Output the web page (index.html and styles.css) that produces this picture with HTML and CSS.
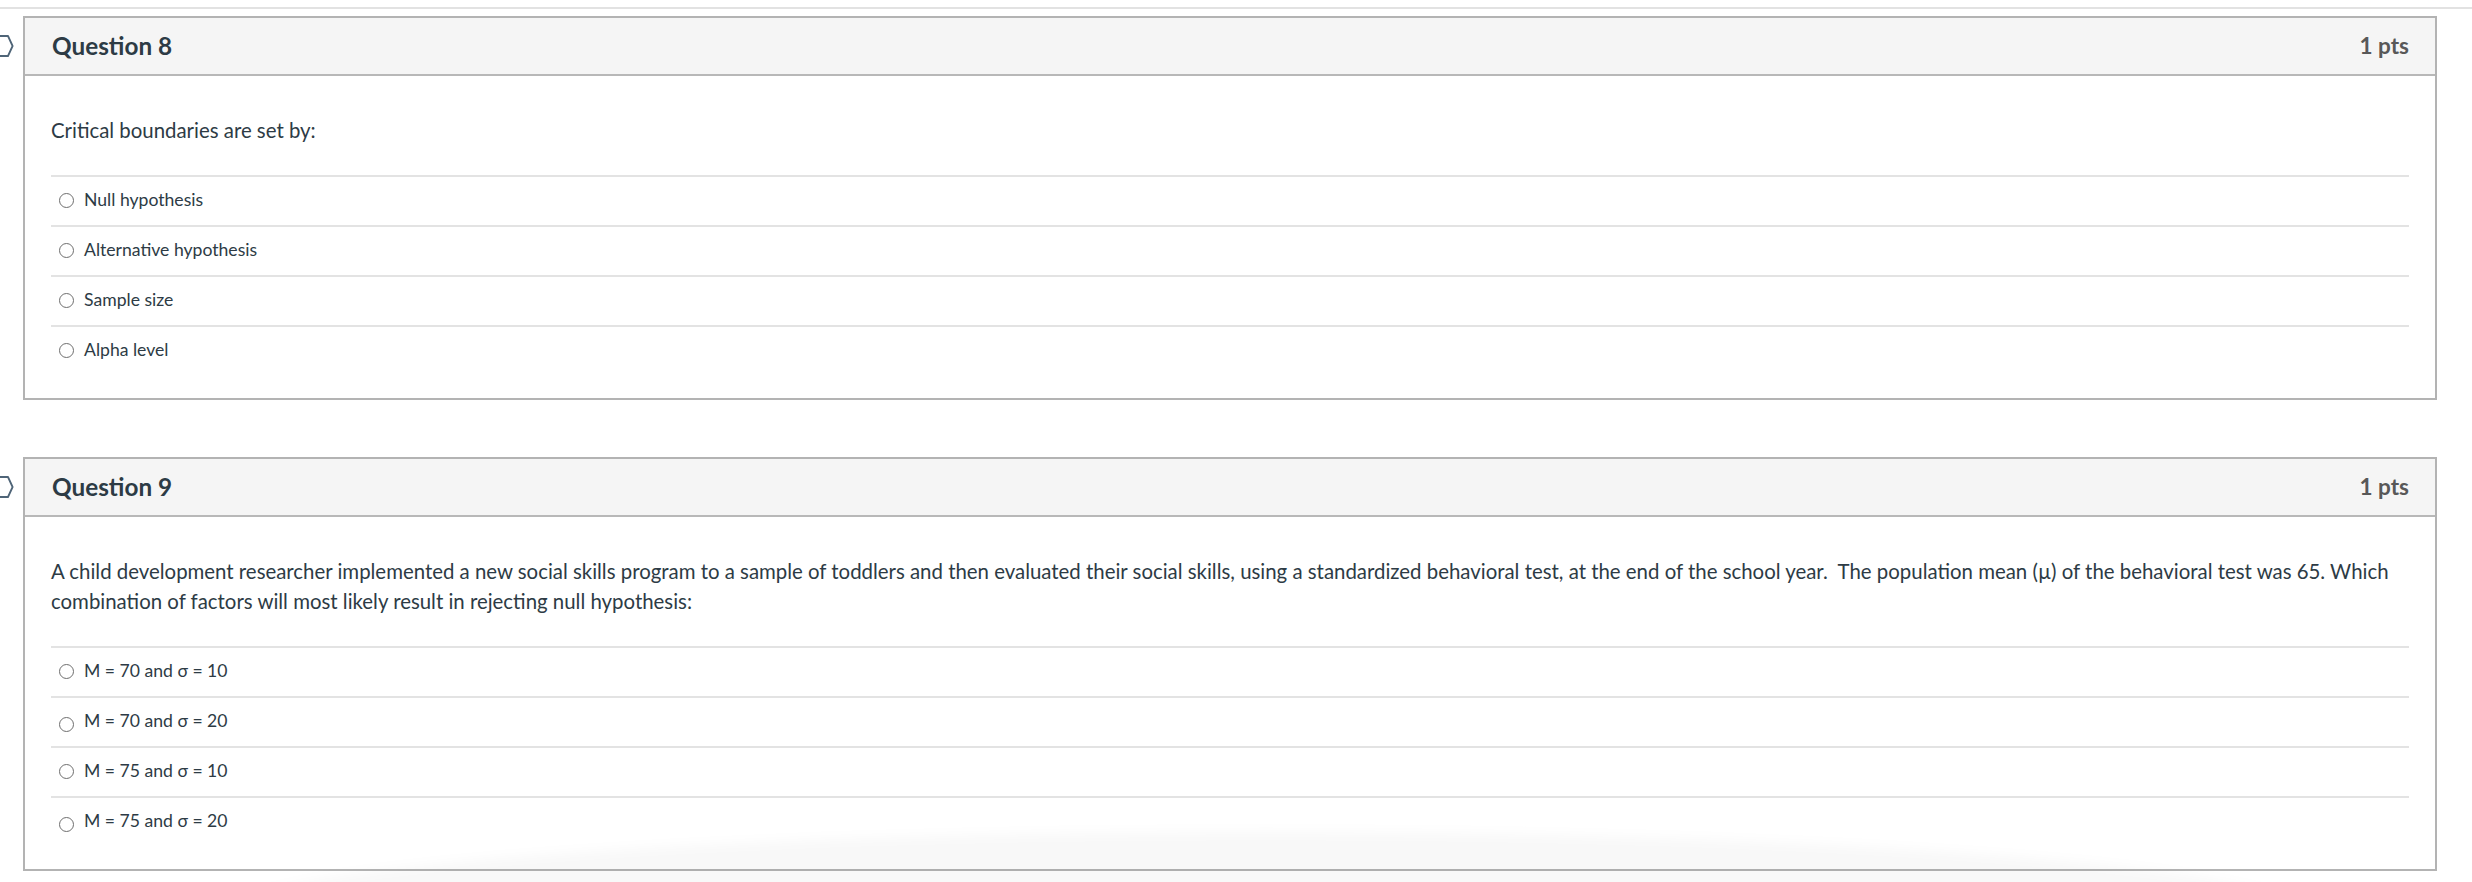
FILE: index.html
```html
<!DOCTYPE html>
<html lang="en">
<head>
<meta charset="utf-8">
<title>Quiz</title>
<link rel="stylesheet" href="styles.css">
</head>
<body>
<div class="page">
  <div class="topbar"></div>

  <div class="question">
    <div class="flag">
      <svg width="14" height="22" viewBox="0 0 14 22"><path d="M-6 1 H8 L12.6 11 L8 21 H-6" fill="none" stroke="#4f6578" stroke-width="1.8" stroke-linejoin="round"/></svg>
    </div>
    <div class="card">
      <div class="card-header">
        <span class="title">Question 8</span>
        <span class="pts">1 pts</span>
      </div>
      <div class="card-body">
        <p class="prompt">Critical boundaries are set by:</p>
        <div class="answers">
          <label class="answer"><span class="radio"></span><span>Null hypothesis</span></label>
          <label class="answer"><span class="radio"></span><span>Alternative hypothesis</span></label>
          <label class="answer"><span class="radio"></span><span>Sample size</span></label>
          <label class="answer"><span class="radio"></span><span>Alpha level</span></label>
        </div>
      </div>
    </div>
  </div>

  <div class="question second">
    <div class="flag">
      <svg width="14" height="22" viewBox="0 0 14 22"><path d="M-6 1 H8 L12.6 11 L8 21 H-6" fill="none" stroke="#4f6578" stroke-width="1.8" stroke-linejoin="round"/></svg>
    </div>
    <div class="card">
      <div class="card-header">
        <span class="title">Question 9</span>
        <span class="pts">1 pts</span>
      </div>
      <div class="card-body">
        <p class="prompt">A child development researcher implemented a new social skills program to a sample of toddlers and then evaluated their social skills, using a standardized behavioral test, at the end of the school year.&nbsp; The population mean (µ) of the behavioral test was 65. Which combination of factors will most likely result in rejecting null hypothesis:</p>
        <div class="answers">
          <label class="answer"><span class="radio"></span><span>M = 70 and σ = 10</span></label>
          <label class="answer"><span class="radio low"></span><span>M = 70 and σ = 20</span></label>
          <label class="answer"><span class="radio"></span><span>M = 75 and σ = 10</span></label>
          <label class="answer"><span class="radio low"></span><span>M = 75 and σ = 20</span></label>
        </div>
      </div>
    </div>
  </div>

  <div class="shade"></div>
</div>
</body>
</html>
```

FILE: styles.css
```css
html, body {
  margin: 0;
  padding: 0;
  background: #ffffff;
}

body {
  font-family: Lato, "Open Sans", "Liberation Sans", sans-serif;
  color: #2d3b45;
  overflow: hidden;
}

.page {
  position: relative;
  width: 2472px;
  height: 882px;
  overflow: hidden;
}

.topbar {
  height: 7px;
  border-bottom: 2px solid #e2e2e2;
  margin-bottom: 7px;
}

.question {
  display: flex;
  align-items: flex-start;
}

.question.second {
  margin-top: 57px;
}

.flag {
  width: 23px;
  flex: 0 0 23px;
  margin-top: 19px;
  line-height: 0;
}

.card {
  width: 2410px;
  border: 2px solid #b3b3b3;
  background: #ffffff;
}

.card-header {
  display: flex;
  align-items: center;
  justify-content: space-between;
  box-sizing: border-box;
  height: 58px;
  padding: 0 26px 2px 27px;
  background: #f5f5f5;
  border-bottom: 2px solid #b8b8b8;
}

.title {
  font-size: 24.3px;
  font-weight: 700;
  color: #2d3b45;
}

.pts {
  font-size: 22.5px;
  font-weight: 700;
  color: #585858;
}

.card-body {
  padding: 39px 26px 23px 26px;
}

.prompt {
  margin: 0 0 30px 0;
  font-size: 20.4px;
  line-height: 30px;
}

.answers {
  display: flex;
  flex-direction: column;
}

.answer {
  display: flex;
  align-items: center;
  gap: 10px;
  box-sizing: border-box;
  height: 50px;
  padding: 0 0 4px 8px;
  border-top: 2px solid #e3e3e3;
  font-size: 17.6px;
}

.radio {
  position: relative;
  top: 1px;
  width: 13px;
  height: 13px;
  border: 1px solid #6e6e6e;
  border-radius: 50%;
  background: #ffffff;
  flex: 0 0 auto;
}

.radio.low {
  top: 4px;
}

.shade {
  position: absolute;
  left: 230px;
  right: 170px;
  top: 832px;
  height: 160px;
  border-radius: 50%;
  background: rgba(0, 0, 0, 0.028);
  filter: blur(6px);
  pointer-events: none;
}
```
